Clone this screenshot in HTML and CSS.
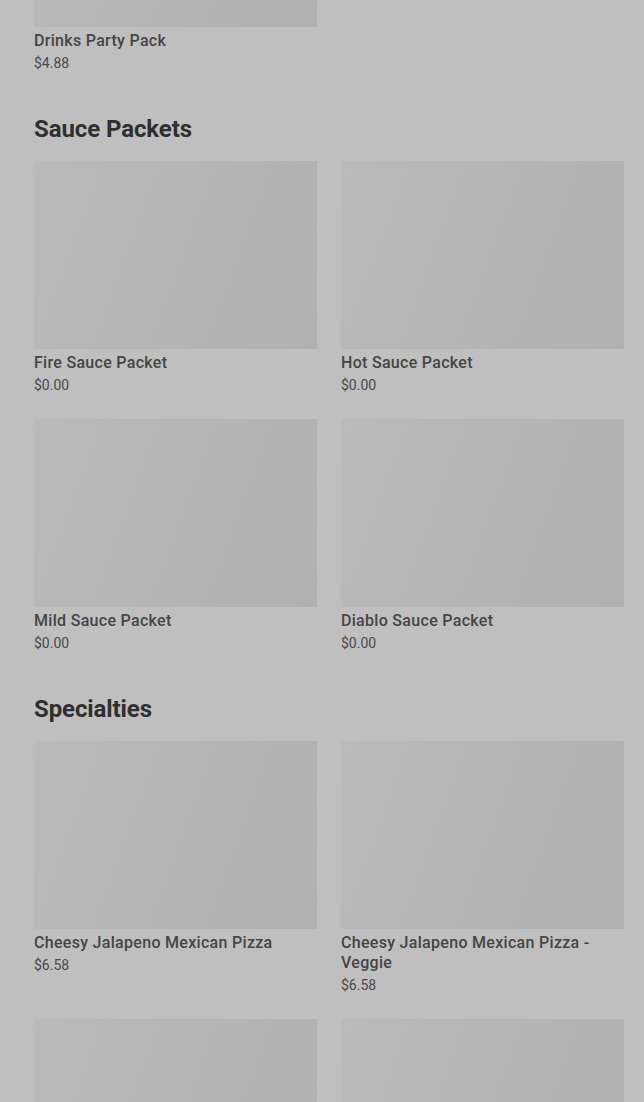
FILE: index.html
```html
<!DOCTYPE html>
<html lang="en">
<head>
<meta charset="utf-8">
<title>Menu</title>
<link rel="stylesheet" href="styles.css">
</head>
<body>
<main class="menu">
  <section class="section first">
    <div class="grid">
      <div class="card">
        <div class="thumb"></div>
        <div class="name">Drinks Party Pack</div>
        <div class="price">$4.88</div>
      </div>
    </div>
  </section>

  <section class="section">
    <h2 class="heading">Sauce Packets</h2>
    <div class="grid">
      <div class="card">
        <div class="thumb"></div>
        <div class="name">Fire Sauce Packet</div>
        <div class="price">$0.00</div>
      </div>
      <div class="card">
        <div class="thumb"></div>
        <div class="name">Hot Sauce Packet</div>
        <div class="price">$0.00</div>
      </div>
      <div class="card">
        <div class="thumb"></div>
        <div class="name">Mild Sauce Packet</div>
        <div class="price">$0.00</div>
      </div>
      <div class="card">
        <div class="thumb"></div>
        <div class="name">Diablo Sauce Packet</div>
        <div class="price">$0.00</div>
      </div>
    </div>
  </section>

  <section class="section">
    <h2 class="heading">Specialties</h2>
    <div class="grid">
      <div class="card">
        <div class="thumb"></div>
        <div class="name">Cheesy Jalapeno Mexican Pizza</div>
        <div class="price">$6.58</div>
      </div>
      <div class="card">
        <div class="thumb"></div>
        <div class="name">Cheesy Jalapeno Mexican Pizza - Veggie</div>
        <div class="price">$6.58</div>
      </div>
      <div class="card">
        <div class="thumb"></div>
      </div>
      <div class="card">
        <div class="thumb"></div>
      </div>
    </div>
  </section>
</main>
</body>
</html>
```

FILE: styles.css
```css
html, body {
  margin: 0;
  padding: 0;
  background: #bfbfbf;
  overflow: hidden;
}

body {
  font-family: Roboto, "Liberation Sans", Arial, sans-serif;
  color: #3d3d3d;
}

.menu {
  padding: 0 20px 0 34px;
  margin-top: -161px;
}

.section {
  margin-top: 40px;
}

.section.first {
  margin-top: 0;
}

.heading {
  margin: 0 0 16px;
  font-size: 24px;
  line-height: 32px;
  font-weight: 700;
  color: #2f2f2f;
  letter-spacing: -0.1px;
}

.grid {
  display: grid;
  grid-template-columns: 283px 283px;
  column-gap: 24px;
  row-gap: 24px;
  align-items: start;
}

.card {
  display: flex;
  flex-direction: column;
}

.thumb {
  height: 188px;
  background: linear-gradient(110deg, #bababa 0%, #b6b6b6 40%, #b3b3b3 70%, #b1b1b1 100%);
}

.name {
  margin-top: 4px;
  font-size: 16px;
  line-height: 20px;
  font-weight: 500;
  letter-spacing: 0.3px;
  color: #454545;
}

.price {
  margin-top: 2px;
  font-size: 14px;
  line-height: 20px;
  font-weight: 400;
  color: #4a4a4a;
}
```
